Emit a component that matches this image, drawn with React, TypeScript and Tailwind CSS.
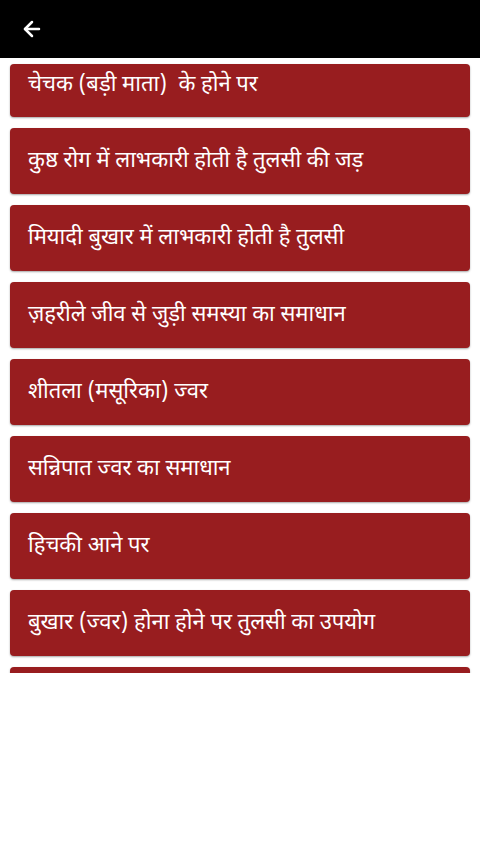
import { ArrowLeft } from 'lucide-react';

const items = [
  'चेचक (बड़ी माता)  के होने पर',
  'कुष्ठ रोग में लाभकारी होती है तुलसी की जड़',
  'मियादी बुखार में लाभकारी होती है तुलसी',
  'ज़हरीले जीव से जुड़ी समस्या का समाधान',
  'शीतला (मसूरिका) ज्वर',
  'सन्निपात ज्वर का समाधान',
  'हिचकी आने पर',
  'बुखार (ज्वर) होना होने पर तुलसी का उपयोग',
  '',
];

export default function App() {
  return (
    <div
      className="w-[480px] h-[854px] bg-white flex flex-col"
      style={{ fontFamily: '"Noto Sans Devanagari", "Noto Sans", "Lohit Devanagari", sans-serif' }}
    >
      {/* Toolbar */}
      <div className="h-[58px] bg-black flex items-center px-[20px] shrink-0">
        <ArrowLeft className="w-[24px] h-[24px] text-white" strokeWidth={2.5} />
      </div>

      {/* List, scrolled so the first card is cut off */}
      <div className="h-[615px] overflow-hidden pt-[6px] flex flex-col gap-[11px]">
        {items.map((text, i) => (
          <div
            key={i}
            className={`mx-[10px] shrink-0 bg-[#981d1f] rounded-[4px] shadow-[0_1px_2px_rgba(0,0,0,0.35)] flex items-center px-[18px] ${
              i === 0 ? 'h-[53px] pb-[10px]' : 'h-[66px] pt-[2px]'
            }`}
          >
            <span className="text-white text-[22px] leading-none whitespace-pre">{text}</span>
          </div>
        ))}
      </div>
    </div>
  );
}
